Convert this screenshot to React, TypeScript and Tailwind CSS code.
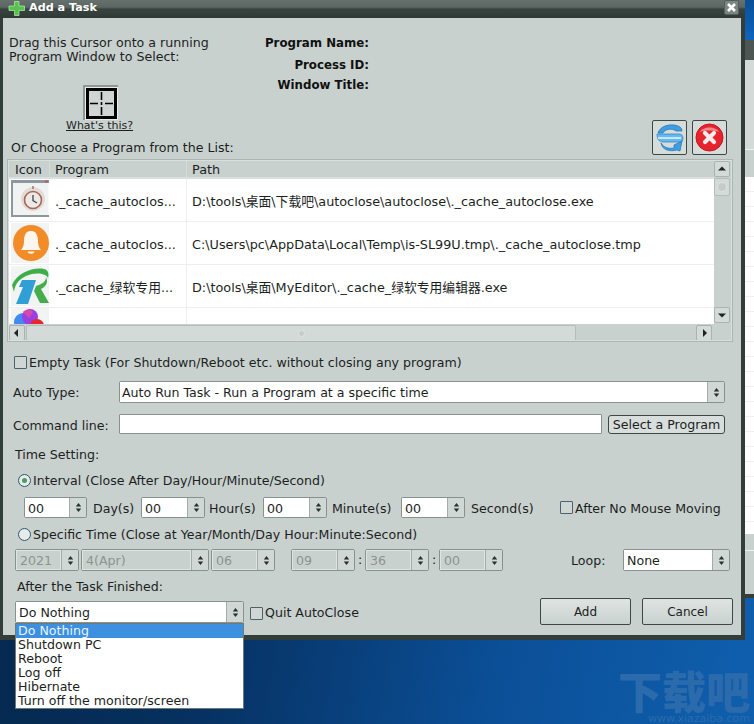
import React from "react";

const Arrows = () => (
  <svg width="7" height="11" viewBox="0 0 7 11" className="block">
    <path d="M3.5 1 L6.2 4.4 H0.8 Z M3.5 10 L6.2 6.6 H0.8 Z" fill="#26302c" />
  </svg>
);

function Spin({ value, w, disabled, cls = "", tight }: { value: string; w: string; disabled?: boolean; cls?: string; tight?: boolean }) {
  return (
    <div className={`flex h-full shrink-0 rounded-[2px] border border-[#87918d] ${w} ${cls}`}>
      <div
        className={`flex-1 min-w-0 pt-[2px] ${tight ? "pl-[2px]" : "pl-[3px]"} flex items-center overflow-hidden ${
          disabled ? "bg-[#c9d1ce] text-[#8b9490] border border-[#dfe5e2]" : "bg-white text-[#1c1f1e]"
        }`}
      >
        {value}
      </div>
      <div className="w-[17px] shrink-0 border-l border-[#a3aca8] bg-[#d0d7d4] flex items-center justify-center">
        <Arrows />
      </div>
    </div>
  );
}

const Check = () => (
  <span className="block w-[13px] h-[13px] shrink-0 rounded-[1px] border border-[#4c6170] bg-[#cfd6d3]" />
);

function Radio({ on }: { on?: boolean }) {
  return (
    <span className="flex items-center justify-center w-[13px] h-[13px] shrink-0 rounded-full border border-[#2d5572] bg-[#e6ecea]">
      {on && <span className="block w-[5px] h-[5px] rounded-full bg-[#4f9a62]" />}
    </span>
  );
}

const ClockIcon = () => (
  <svg width="38" height="38" viewBox="0 0 38 38" className="block">
    <rect x="0.5" y="1" width="37" height="36" fill="#f1f3f3" />
    <rect x="0" y="0" width="38" height="3" fill="#8d979d" />
    <rect x="0" y="0" width="2" height="37" fill="#8d979d" />
    <rect x="0" y="35" width="38" height="2" fill="#8d979d" />
    <rect x="34" y="0.5" width="3" height="2" fill="#b5606a" />
    <circle cx="22" cy="19" r="12" fill="#e3dcd6" />
    <circle cx="22" cy="20" r="8.5" fill="#eee9e4" stroke="#a5665c" strokeWidth="1.6" />
    <path d="M22 6 V9" stroke="#a5665c" strokeWidth="1.4" />
    <path d="M22 15 V20.5 L26 23" fill="none" stroke="#4a4f55" strokeWidth="1.4" />
  </svg>
);

const BellIcon = () => (
  <svg width="38" height="40" viewBox="0 0 38 40" className="block">
    <rect width="38" height="40" fill="#f2f3f3" />
    <circle cx="20" cy="20" r="18" fill="#f28c28" />
    <path d="M20 8 C14.5 8 13 13 13 18 C13 23 11.5 25 10 27 H30 C28.5 25 27 23 27 18 C27 13 25.5 8 20 8 Z" fill="#fdf6ee" />
    <path d="M16.5 28.5 C17 31.5 23 31.5 23.5 28.5 Z" fill="#fdf6ee" />
  </svg>
);

const RIcon = () => (
  <svg width="38" height="40" viewBox="0 0 38 40" className="block">
    <rect width="38" height="40" fill="#f2f4f4" />
    <path d="M1 19 C6 7 22 1 33 3 C38 4 38 9 37 12 C35 7 24 6 15 10 C9 13 4 17 3 26 Z" fill="#3fae49" />
    <path d="M11 14 H25 L17 38 H5 L12 21 H8 Z" fill="#2f9fd6" />
    <path d="M25 20 C31 18 35 16 35 11 C38 17 34 21 30 23 L38 37 H29 L23 25 Z" fill="#45ad4c" />
  </svg>
);

const FlowerIcon = () => (
  <svg width="38" height="16" viewBox="0 0 38 16" className="block">
    <rect width="38" height="16" fill="#f2f3f3" />
    <circle cx="12" cy="14" r="9" fill="#3f8cf0" />
    <circle cx="19" cy="9" r="8" fill="#9b3fe0" />
    <circle cx="26" cy="18" r="7" fill="#e8262e" />
    <path d="M12 4 C15 1 20 1 22 4 L18 10 Z" fill="#d84aa8" />
  </svg>
);

const Tri = ({ d }: { d: "l" | "r" | "u" | "d" }) => {
  const p = { l: "M6 1 V9 L2 5 Z", r: "M4 1 V9 L8 5 Z", u: "M1 6.5 H9 L5 2.5 Z", d: "M1 3.5 H9 L5 7.5 Z" }[d];
  return (
    <svg width="10" height="10" viewBox="0 0 10 10" className="block">
      <path d={p} fill="#1d2321" />
    </svg>
  );
};

const ScrollBtn = ({ d }: { d: "l" | "r" | "u" | "d" }) => (
  <div className="w-[16px] h-[16px] shrink-0 rounded-[2px] border border-[#aab3af] bg-[#d3dad7] flex items-center justify-center">
    <Tri d={d} />
  </div>
);

const rows = [
  { icon: <ClockIcon />, name: "._cache_autoclos...", path: "D:\\tools\\桌面\\下载吧\\autoclose\\autoclose\\._cache_autoclose.exe" },
  { icon: <BellIcon />, name: "._cache_autoclos...", path: "C:\\Users\\pc\\AppData\\Local\\Temp\\is-SL99U.tmp\\._cache_autoclose.tmp" },
  { icon: <RIcon />, name: "._cache_绿软专用...", path: "D:\\tools\\桌面\\MyEditor\\._cache_绿软专用编辑器.exe" },
];

export default function App() {
  return (
    <div className="relative w-[754px] h-[724px] overflow-hidden flex items-start bg-[linear-gradient(100deg,#052546_0%,#06305f_35%,#0b4f97_70%,#0f5fae_100%)] font-['DejaVu_Sans','Noto_Sans_CJK_SC',sans-serif] text-[12.6px] leading-[14px] text-[#1c1f1e]">
      {/* dialog */}
      <div className="relative z-10 w-[745px] h-[640px] shrink-0 flex flex-col bg-[#333d39] pl-[3px] pr-[4px] pb-[5px]">
        {/* title bar */}
        <div className="h-[18px] -ml-[3px] -mr-[4px] shrink-0 flex items-start bg-[linear-gradient(#66716d_0%,#5b6662_40%,#39433f_50%,#2f3935_100%)]">
          <svg width="18" height="16" viewBox="0 0 18 16" className="ml-[8px] mt-[1px] shrink-0">
            <path d="M6.5 0.5 H11 V5 H16.5 V9.5 H11 V14.5 H6.5 V9.5 H1 V5 H6.5 Z" fill="#57c24c" stroke="#bfeeb4" strokeWidth="0.7" />
          </svg>
          <span className="ml-[3px] mt-[1px] font-bold text-white text-[11.2px]">Add a Task</span>
          <div className="ml-auto mr-[6px] w-[15px] h-[15px] rounded-[2px] bg-[#7b8682] border border-[#535e5a] flex items-center justify-center">
            <svg width="11" height="11" viewBox="0 0 11 11">
              <path d="M2 2 L9 9 M9 2 L2 9" stroke="#fff" strokeWidth="2.6" />
            </svg>
          </div>
        </div>

        {/* panel */}
        <div className="flex-1 flex flex-col bg-[#c9d1ce]">
          {/* top */}
          <div className="h-[141px] shrink-0 flex">
            <div className="w-[256px] shrink-0 flex flex-col pl-[6px] pt-[18px]">
              <div className="whitespace-nowrap">Drag this Cursor onto a running</div>
              <div className="whitespace-nowrap">Program Window to Select:</div>
              <div className="mt-[21px] ml-[74px] w-[35px] h-[35px] bg-[#e8ecea] border-t-2 border-l-2 border-[#8f9794] p-[1px]">
                <svg width="31" height="31" viewBox="0 0 31 31" className="block">
                  <rect x="1.5" y="1.5" width="28" height="28" fill="#cfd5d2" stroke="#000" strokeWidth="3" />
                  <path d="M15.5 4 V12 M15.5 14 V17 M15.5 19 V27 M4 15.5 H12 M19 15.5 H27" stroke="#000" strokeWidth="1.6" />
                </svg>
              </div>
              <div className="ml-[57px] w-[68px] text-[11px] leading-[12px] underline whitespace-nowrap">What&apos;s this?</div>
              <div className="mt-[9px] ml-[2px] whitespace-nowrap">Or Choose a Program from the List:</div>
            </div>
            <div className="w-[110px] shrink-0 flex flex-col items-end pt-[18px] text-[11.8px] font-bold text-[#111]">
              <div className="whitespace-nowrap">Program Name:</div>
              <div className="mt-[8px] whitespace-nowrap">Process ID:</div>
              <div className="mt-[6px] whitespace-nowrap">Window Title:</div>
            </div>
            <div className="flex-1 flex items-start justify-end gap-[5px] pr-[14px] pt-[102px]">
              <div className="w-[35px] h-[35px] rounded-[2px] border border-[#3d4744] bg-[#d6dcda] flex items-center justify-center">
                <svg width="29" height="29" viewBox="0 0 29 29">
                  <path d="M3 10 C5 3 15 0 23 3 C26 4 27 6 27 8 H21 C17 5 10 6 8 10 Z" fill="#3f9de0" stroke="#1f74b8" strokeWidth="0.7" />
                  <path d="M2 11 H24 C27 11 28 13 28 15 C28 18 27 19 25 19 H8 C4 19 2 16 2 11 Z" fill="#66b9ee" stroke="#2a7fc0" strokeWidth="0.7" />
                  <path d="M3 15 H26" stroke="#e4f3fc" strokeWidth="1.6" />
                  <path d="M6 20 C9 25 15 26 19 25 L19 22 L27 18 L25 28 L22 27 C15 29 7 27 6 20 Z" fill="#3f9de0" stroke="#1f74b8" strokeWidth="0.7" />
                </svg>
              </div>
              <div className="w-[35px] h-[35px] rounded-[2px] border border-[#3d4744] bg-[#d6dcda] flex items-center justify-center">
                <svg width="29" height="29" viewBox="0 0 29 29">
                  <circle cx="14.5" cy="14.5" r="13.5" fill="#e5242e" stroke="#c4161f" />
                  <path d="M5 9 C8 3 21 3 24 9 C20 7 9 7 5 9 Z" fill="#f58a8e" />
                  <path d="M10 10 L19 19 M19 10 L10 19" stroke="#f7ecec" strokeWidth="4.2" strokeLinecap="round" />
                </svg>
              </div>
            </div>
          </div>

          {/* table */}
          <div className="ml-[4px] w-[726px] h-[183px] shrink-0 border-2 border-[#aeb6b3] outline-1 -outline-offset-2 outline-[#d9dfdc] flex overflow-hidden text-[12.8px]">
            <div className="flex-1 min-w-0 flex flex-col">
              <div className="h-[18px] shrink-0 flex border-b-2 border-[#dbe0de] bg-[#c9d1ce]">
                <div className="w-[41px] pl-[6px] border-r border-[#d6dcd9] leading-[18px]">Icon</div>
                <div className="w-[137px] pl-[5px] border-r border-[#d6dcd9] leading-[18px]">Program</div>
                <div className="flex-1 pl-[5px] leading-[18px]">Path</div>
              </div>
              <div className="h-[145px] shrink-0 bg-white overflow-hidden">
                {rows.map((r, i) => (
                  <div key={i} className="h-[43px] flex border-b border-[#eef0f0]">
                    <div className="w-[41px] pl-[2px] pt-[1px] shrink-0">{r.icon}</div>
                    <div className="w-[137px] pl-[5px] pt-[4px] shrink-0 border-r border-[#eef0f0] flex items-center whitespace-nowrap">{r.name}</div>
                    <div className="flex-1 pl-[5px] pt-[4px] flex items-center whitespace-nowrap">{r.path}</div>
                  </div>
                ))}
                <div className="h-[16px] flex">
                  <div className="w-[41px] pl-[2px] shrink-0"><FlowerIcon /></div>
                  <div className="w-[137px] shrink-0 border-r border-[#eef0f0]" />
                </div>
              </div>
              <div className="h-[18px] shrink-0 flex items-start pt-[1px] gap-[1px]">
                <ScrollBtn d="l" />
                <div className="w-[550px] h-[16px] rounded-[2px] border border-[#b5bdb9] bg-[#d3dad7] flex items-center justify-center">
                  <span className="block w-[7px] h-[7px] rounded-full bg-[#c4cbc8] border border-[#e0e5e3]" />
                </div>
                <div className="flex-1" />
                <ScrollBtn d="r" />
                <div className="w-[1px]" />
              </div>
            </div>
            <div className="w-[17px] shrink-0 flex flex-col bg-[#c9d1ce] gap-[1px]">
              <ScrollBtn d="u" />
              <div className="w-[16px] h-[18px] rounded-[2px] border border-[#b5bdb9] bg-[#d3dad7] flex items-center justify-center">
                <span className="block w-[10px] h-[10px] rounded-full bg-[#c4cbc8] border border-[#dfe4e2]" />
              </div>
              <div className="h-[109px]" />
              <ScrollBtn d="d" />
            </div>
          </div>

          {/* empty task */}
          <div className="mt-[13px] h-[14px] shrink-0 flex items-center ml-[11px] gap-[2px]">
            <Check />
            <span className="pt-[2px]">Empty Task (For Shutdown/Reboot etc. without closing any program)</span>
          </div>

          {/* auto type */}
          <div className="mt-[12px] h-[22px] shrink-0 flex items-center">
            <span className="ml-[10px] pt-[2px] w-[106px] shrink-0">Auto Type:</span>
            <Spin value="Auto Run Task - Run a Program at a specific time" w="w-[606px]" tight />
          </div>

          {/* command line */}
          <div className="mt-[11px] h-[20px] shrink-0 flex items-center">
            <span className="ml-[10px] pt-[4px] w-[106px] shrink-0">Command line:</span>
            <div className="w-[483px] h-full bg-white border border-[#87918d] rounded-[1px]" />
            <div className="ml-[6px] w-[117px] h-[19px] pt-[2px] rounded-[3px] border border-[#3d4744] bg-[#d8dedb] flex items-center justify-center whitespace-nowrap">
              Select a Program
            </div>
          </div>

          {/* time setting */}
          <div className="mt-[14px] h-[13px] shrink-0 ml-[12px]">Time Setting:</div>

          <div className="mt-[12px] h-[14px] shrink-0 ml-[15px] flex items-center gap-[2px]">
            <Radio on />
            <span className="pt-[2px]">Interval (Close After Day/Hour/Minute/Second)</span>
          </div>

          <div className="mt-[10px] h-[21px] shrink-0 flex items-center pl-[21px]">
            <Spin value="00" w="w-[63px]" />
            <span className="ml-[6px] pt-[2px] w-[48px] shrink-0">Day(s)</span>
            <Spin value="00" w="w-[64px]" />
            <span className="ml-[4px] pt-[2px] w-[54px] shrink-0">Hour(s)</span>
            <Spin value="00" w="w-[64px]" />
            <span className="ml-[5px] pt-[2px] w-[69px] shrink-0">Minute(s)</span>
            <Spin value="00" w="w-[64px]" />
            <span className="ml-[6px] pt-[2px] w-[89px] shrink-0">Second(s)</span>
            <Check />
            <span className="ml-[2px] pt-[2px] whitespace-nowrap">After No Mouse Moving</span>
          </div>

          <div className="mt-[9px] h-[14px] shrink-0 ml-[15px] flex items-center gap-[2px]">
            <Radio />
            <span className="pt-[2px]">Specific Time (Close at Year/Month/Day Hour:Minute:Second)</span>
          </div>

          <div className="mt-[8px] h-[22px] shrink-0 flex items-center pl-[12px]">
            <Spin value="2021" w="w-[64px]" disabled />
            <Spin value="4(Apr)" w="w-[128px]" disabled cls="ml-[2px]" />
            <Spin value="06" w="w-[64px]" disabled cls="ml-[2px]" />
            <Spin value="09" w="w-[64px]" disabled cls="ml-[16px]" />
            <span className="w-[10px] text-center shrink-0">:</span>
            <Spin value="36" w="w-[64px]" disabled />
            <span className="w-[10px] text-center shrink-0">:</span>
            <Spin value="00" w="w-[64px]" disabled />
            <span className="ml-[68px] pt-[2px] w-[52px] shrink-0">Loop:</span>
            <Spin value="None" w="w-[107px]" />
          </div>

          <div className="mt-[9px] h-[13px] shrink-0 ml-[14px]">After the Task Finished:</div>

          {/* bottom */}
          <div className="mt-[5px] h-[27px] shrink-0 flex items-start pl-[12px]">
            <div className="relative mt-[3px] h-[22px] w-[229px] shrink-0">
              <Spin value="Do Nothing" w="w-[229px]" />
              <div className="absolute left-0 top-full w-[229px] h-[86px] bg-white border border-[#6f7a76] z-20">
                <div className="h-[14px] bg-[#3d8fe0] text-[#e8f4ff] pl-[2px]">Do Nothing</div>
                <div className="h-[14px] pl-[2px]">Shutdown PC</div>
                <div className="h-[14px] pl-[2px]">Reboot</div>
                <div className="h-[14px] pl-[2px]">Log off</div>
                <div className="h-[14px] pl-[2px]">Hibernate</div>
                <div className="h-[14px] pl-[2px] whitespace-nowrap">Turn off the monitor/screen</div>
              </div>
            </div>
            <div className="mt-[8px] ml-[6px] flex items-center gap-[2px] w-[290px] shrink-0">
              <Check />
              <span>Quit AutoClose</span>
            </div>
            <div className="w-[91px] h-[27px] text-[12px] rounded-[2px] border border-[#3d4744] bg-[linear-gradient(#dfe4e2,#c9d1ce)] flex items-center justify-center">Add</div>
            <div className="ml-[11px] w-[91px] h-[27px] text-[12px] rounded-[2px] border border-[#3d4744] bg-[linear-gradient(#dfe4e2,#c9d1ce)] flex items-center justify-center">Cancel</div>
          </div>
        </div>
      </div>

      {/* window behind, right edge */}
      <div className="w-[9px] shrink-0 flex flex-col">
        <div className="h-[40px] bg-[linear-gradient(#0b4f97,#0d64be)]" />
        <div className="h-[20px] bg-[#4c5753]" />
        <div className="h-[89px] bg-[#d3dad7]" />
        <div className="h-[28px] bg-[#c9d1ce] border-t border-[#eef1f0]" />
        <div className="h-[357px] bg-white bg-[repeating-linear-gradient(#ffffff_0px,#ffffff_14px,#eef0f0_14px,#eef0f0_15px)]" />
        <div className="h-[16px] bg-[#c9d1ce]" />
        <div className="h-[44px] bg-[#c9d1ce] border-t border-[#eef1f0]" />
        <div className="h-[4px] bg-[#333d39]" />
      </div>

      {/* watermark */}
      <div className="absolute left-[617px] top-[667px] w-[133px] flex flex-col items-end text-[#2c6bab]">
        <div className="font-['Noto_Sans_CJK_SC',sans-serif] font-black text-[44px] leading-[46px] whitespace-nowrap">下载吧</div>
        <div className="font-['DejaVu_Sans',sans-serif] text-[11px] leading-[11px] whitespace-nowrap">www.xiazaiba.com</div>
      </div>
    </div>
  );
}
